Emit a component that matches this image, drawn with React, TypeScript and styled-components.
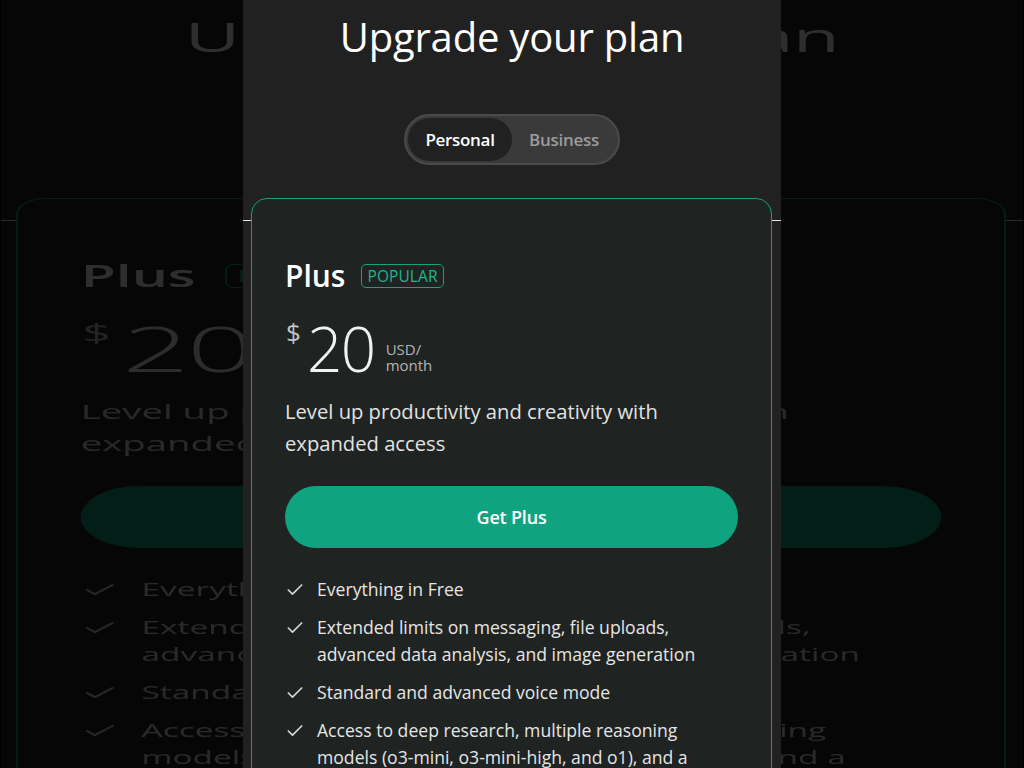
import React from "react";
import styled, { createGlobalStyle } from "styled-components";
import { Check } from "lucide-react";

const GlobalStyle = createGlobalStyle`
  html, body { margin: 0; padding: 0; background: #000; }
  body { font-family: "Open Sans", "Noto Sans", "DejaVu Sans", sans-serif; }
  * { box-sizing: border-box; }
`;

const Stage = styled.div`
  position: relative;
  width: 100%;
  height: 768px;
  overflow: hidden;
  background: #000;
  display: flex;
  justify-content: center;
`;

const Backdrop = styled.div`
  position: absolute;
  inset: 0;
  display: flex;
  justify-content: center;
  transform: scaleX(1.9);
  transform-origin: center;
  filter: brightness(0.18);
  pointer-events: none;
`;

const Front = styled.div`
  position: relative;
  z-index: 1;
  display: flex;
`;

const Panel = styled.div`
  width: 538px;
  height: 768px;
  background: #212121;
  display: flex;
  flex-direction: column;
  overflow: hidden;
  color: #fff;
`;

const Header = styled.header`
  height: 221px;
  flex-shrink: 0;
  border-bottom: 1px solid #e4e4e4;
  display: flex;
  flex-direction: column;
  align-items: center;
`;

const Title = styled.h1`
  margin: 13px 0 0;
  font-size: 40px;
  line-height: 48px;
  font-weight: 500;
  letter-spacing: -0.2px;
  color: #fff;
`;

const Toggle = styled.div`
  margin-top: 53px;
  display: flex;
  padding: 2px;
  border: 2px solid #4a4a4a;
  border-radius: 999px;
  background: #3a3a3a;
`;

const Segment = styled.button<{ $active?: boolean }>`
  width: 104px;
  height: 43px;
  border: none;
  border-radius: 999px;
  font-family: inherit;
  font-size: 17px;
  font-weight: 600;
  letter-spacing: -0.3px;
  background: ${(p) => (p.$active ? "#212121" : "transparent")};
  color: ${(p) => (p.$active ? "#ffffff" : "#9c9c9c")};
  padding: 0;
`;

const Card = styled.section`
  margin: -23px 0 0 8px;
  width: 521px;
  flex-shrink: 0;
  border: 1.5px solid #17a07d;
  border-radius: 16px;
  background: #1f2322;
  padding: 59px 33px 40px 33px;
  display: flex;
  flex-direction: column;
`;

const PlanHead = styled.div`
  display: flex;
  align-items: center;
  height: 36px;
`;

const PlanName = styled.h2`
  margin: 0;
  font-size: 30px;
  line-height: 36px;
  font-weight: 600;
  color: #fff;
`;

const Badge = styled.span`
  margin-left: 16px;
  height: 24px;
  display: inline-flex;
  align-items: center;
  padding: 0 5px;
  border: 1px solid #12a37f;
  border-radius: 5px;
  color: #1fb68d;
  font-size: 15.5px;
  letter-spacing: 0.1px;
`;

const PriceRow = styled.div`
  margin-top: 23px;
  display: flex;
  align-items: flex-start;
  height: 62px;
`;

const Currency = styled.span`
  margin-top: 2px;
  margin-left: 1px;
  font-size: 26px;
  line-height: 26px;
  color: #c4c4c4;
  font-weight: 400;
`;

const Amount = styled.span`
  margin-left: 6px;
  font-size: 62px;
  line-height: 62px;
  font-weight: 300;
  letter-spacing: -1.5px;
  color: #f2f2f2;
`;

const Per = styled.span`
  align-self: flex-end;
  margin: 0 0 6px 11px;
  display: flex;
  flex-direction: column;
  font-size: 15px;
  line-height: 16px;
  color: #b4b4b4;
`;

const Description = styled.p`
  margin: 16px 0 0;
  font-size: 20.2px;
  line-height: 32px;
  color: #e2e2e2;
  font-weight: 400;
`;

const CTA = styled.button`
  margin-top: 27px;
  height: 62px;
  width: 100%;
  border: none;
  border-radius: 999px;
  background: #10a37f;
  color: #fff;
  font-family: inherit;
  font-size: 18px;
  font-weight: 600;
  letter-spacing: -0.2px;
`;

const Features = styled.ul`
  list-style: none;
  margin: 28px 0 0;
  padding: 0;
  display: flex;
  flex-direction: column;
  gap: 11px;
`;

const Feature = styled.li`
  display: flex;
  align-items: flex-start;
  gap: 12px;
  font-size: 17.6px;
  line-height: 27px;
  color: #e6e6e6;
`;

const Tick = styled.span`
  flex-shrink: 0;
  width: 20px;
  height: 27px;
  display: flex;
  align-items: center;
  color: #d6d6d6;
`;

const features = [
  "Everything in Free",
  "Extended limits on messaging, file uploads, advanced data analysis, and image generation",
  "Standard and advanced voice mode",
  "Access to deep research, multiple reasoning models (o3-mini, o3-mini-high, and o1), and a research preview of GPT-4.5",
  "Create and use projects, tasks, and custom GPTs",
];

function PlanPage() {
  return (
    <Panel>
      <Header>
        <Title>Upgrade your plan</Title>
        <Toggle>
          <Segment $active>Personal</Segment>
          <Segment>Business</Segment>
        </Toggle>
      </Header>
      <Card>
        <PlanHead>
          <PlanName>Plus</PlanName>
          <Badge>POPULAR</Badge>
        </PlanHead>
        <PriceRow>
          <Currency>$</Currency>
          <Amount>20</Amount>
          <Per>
            <span>USD/</span>
            <span>month</span>
          </Per>
        </PriceRow>
        <Description>Level up productivity and creativity with expanded access</Description>
        <CTA>Get Plus</CTA>
        <Features>
          {features.map((f) => (
            <Feature key={f}>
              <Tick>
                <Check size={20} strokeWidth={2} />
              </Tick>
              <span>{f}</span>
            </Feature>
          ))}
        </Features>
      </Card>
    </Panel>
  );
}

export default function App() {
  return (
    <>
      <GlobalStyle />
      <Stage>
        <Backdrop aria-hidden="true">
          <PlanPage />
        </Backdrop>
        <Front>
          <PlanPage />
        </Front>
      </Stage>
    </>
  );
}
